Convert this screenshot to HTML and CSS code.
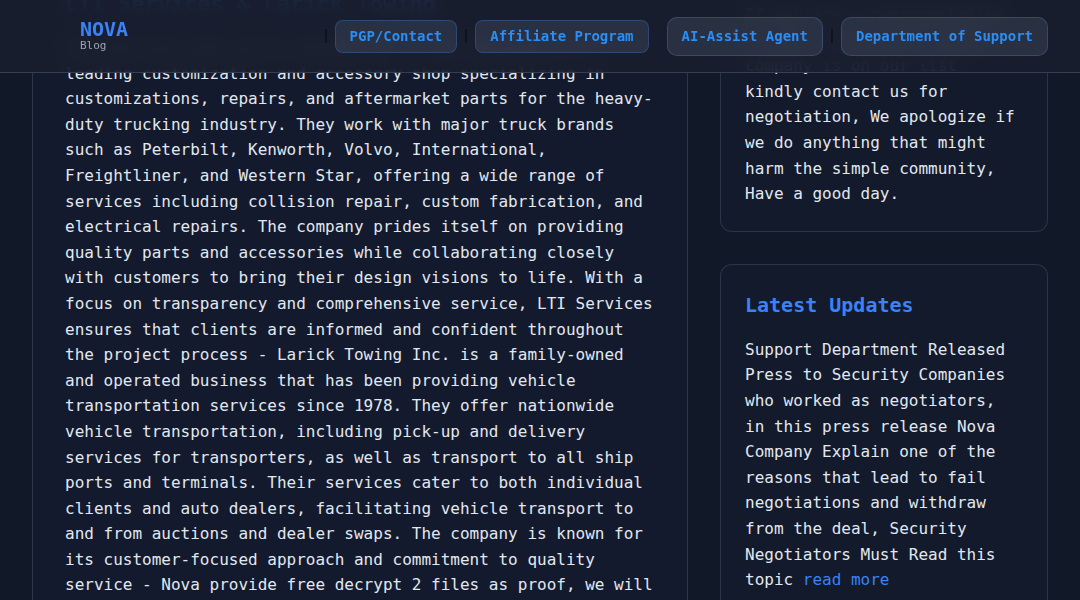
FILE: index.html
```html
<!DOCTYPE html>
<html lang="en">
<head>
<meta charset="utf-8">
<title>Nova Blog</title>
<link rel="stylesheet" href="styles.css">
</head>
<body>
<header class="site-header">
  <div class="header-inner">
    <a class="logo" href="#">
      <span class="logo-title">NOVA</span>
      <span class="logo-sub">Blog</span>
    </a>
    <nav class="nav">
      <span class="nav-sep"></span>
      <a class="nav-link" href="#">PGP/Contact</a>
      <span class="nav-sep"></span>
      <a class="nav-link" href="#">Affiliate Program</a>
      <span class="nav-sep nav-sep-hidden"></span>
      <a class="nav-link nav-link-lg" href="#">AI-Assist Agent</a>
      <span class="nav-sep"></span>
      <a class="nav-link nav-link-lg" href="#">Department of Support</a>
    </nav>
  </div>
</header>
<main class="layout">
  <article class="card post">
    <div class="post-meta">Posts / Companies</div>
    <h1 class="post-title">LTI Services &amp; Larick Towing</h1>
    <p class="post-body">LTI Services and Larick Towing Inc. - LTI Services is a leading customization and accessory shop specializing in customizations, repairs, and aftermarket parts for the heavy-duty trucking industry. They work with major truck brands such as Peterbilt, Kenworth, Volvo, International, Freightliner, and Western Star, offering a wide range of services including collision repair, custom fabrication, and electrical repairs. The company prides itself on providing quality parts and accessories while collaborating closely with customers to bring their design visions to life. With a focus on transparency and comprehensive service, LTI Services ensures that clients are informed and confident throughout the project process - Larick Towing Inc. is a family-owned and operated business that has been providing vehicle transportation services since 1978. They offer nationwide vehicle transportation, including pick-up and delivery services for transporters, as well as transport to all ship ports and terminals. Their services cater to both individual clients and auto dealers, facilitating vehicle transport to and from auctions and dealer swaps. The company is known for its customer-focused approach and commitment to quality service - Nova provide free decrypt 2 files as proof, we will also provide a list of the files that we have taken from the network of the company, kindly contact us through the support department for more details.</p>
  </article>
  <aside class="sidebar">
    <section class="card widget">
      <h2 class="widget-title">Notice</h2>
      <p class="widget-text">If you are a representative of any organization whose company is on our list kindly contact us for negotiation, We apologize if we do anything that might harm the simple community, Have a good day.</p>
    </section>
    <section class="card widget">
      <h2 class="widget-title">Latest Updates</h2>
      <p class="widget-text">Support Department Released Press to Security Companies who worked as negotiators, in this press release Nova Company Explain one of the reasons that lead to fail negotiations and withdraw from the deal, Security Negotiators Must Read this topic <a class="more-link" href="#">read more</a></p>
    </section>
  </aside>
</main>
<script src="script.js"></script>
</body>
</html>
```

FILE: styles.css
```css
* {
  box-sizing: border-box;
}

html,
body {
  margin: 0;
  padding: 0;
}

body {
  background: #111827;
  color: #e2e8f0;
  font-family: "DejaVu Sans Mono", "Liberation Mono", monospace;
  font-size: 16px;
  line-height: 1.6;
}

/* Header */
.site-header {
  position: fixed;
  top: 0;
  left: 0;
  right: 0;
  height: 73px;
  background: rgba(24, 30, 45, 0.9);
  backdrop-filter: blur(10px);
  -webkit-backdrop-filter: blur(10px);
  border-bottom: 1px solid rgba(148, 163, 184, 0.25);
  z-index: 10;
}

.header-inner {
  height: 72px;
  display: flex;
  align-items: center;
  justify-content: space-between;
  padding: 0 32px 0 80px;
}

.logo {
  display: flex;
  flex-direction: column;
  text-decoration: none;
}

.logo-title {
  font-size: 20px;
  line-height: 1;
  font-weight: bold;
  color: #3b82f6;
}

.logo-sub {
  font-size: 11px;
  line-height: 1.2;
  color: #9ca3af;
}

.nav {
  display: flex;
  align-items: center;
  gap: 8px;
}

.nav-sep {
  width: 2px;
  height: 14px;
  background: rgba(5, 10, 20, 0.55);
}

.nav-sep-hidden {
  visibility: hidden;
}

.nav-link {
  display: block;
  padding: 7px 14px;
  font-size: 14px;
  line-height: 17px;
  font-weight: bold;
  color: #2b8ef5;
  text-decoration: none;
  background: rgba(100, 116, 139, 0.22);
  border: 1px solid rgba(59, 130, 246, 0.3);
  border-radius: 8px;
}

.nav-link-lg {
  padding: 10px 14px;
  border-radius: 10px;
  border-color: rgba(96, 140, 200, 0.3);
}

/* Layout */
.layout {
  display: grid;
  grid-template-columns: 2fr 1fr;
  gap: 32px;
  align-items: start;
  padding: 105px 32px 32px;
}

.card {
  background: #131a2d;
  border: 1px solid rgba(148, 163, 184, 0.2);
  border-radius: 12px;
}

.post {
  padding: 32px;
}

.post-meta {
  font-size: 14px;
  line-height: 22.4px;
  margin-bottom: 6px;
  color: #9ca3af;
}

.post-title {
  margin: 0 0 16px;
  font-size: 22px;
  line-height: 1.3;
  font-weight: bold;
  color: #3b82f6;
}

.post-body {
  margin: 0;
}

.sidebar {
  display: flex;
  flex-direction: column;
  gap: 32px;
}

.widget {
  background: #121a2b;
  padding: 24px;
}

.widget-title {
  margin: 0 0 16px;
  font-size: 20px;
  line-height: 32px;
  font-weight: bold;
  color: #3b82f6;
}

.widget-text {
  margin: 0;
}

.more-link {
  color: #3b82f6;
  text-decoration: none;
}
```

FILE: script.js
```js
if ('scrollRestoration' in history) {
  history.scrollRestoration = 'manual';
}
window.scrollTo(0, 176);
window.addEventListener('load', function () {
  window.scrollTo(0, 176);
});
```
